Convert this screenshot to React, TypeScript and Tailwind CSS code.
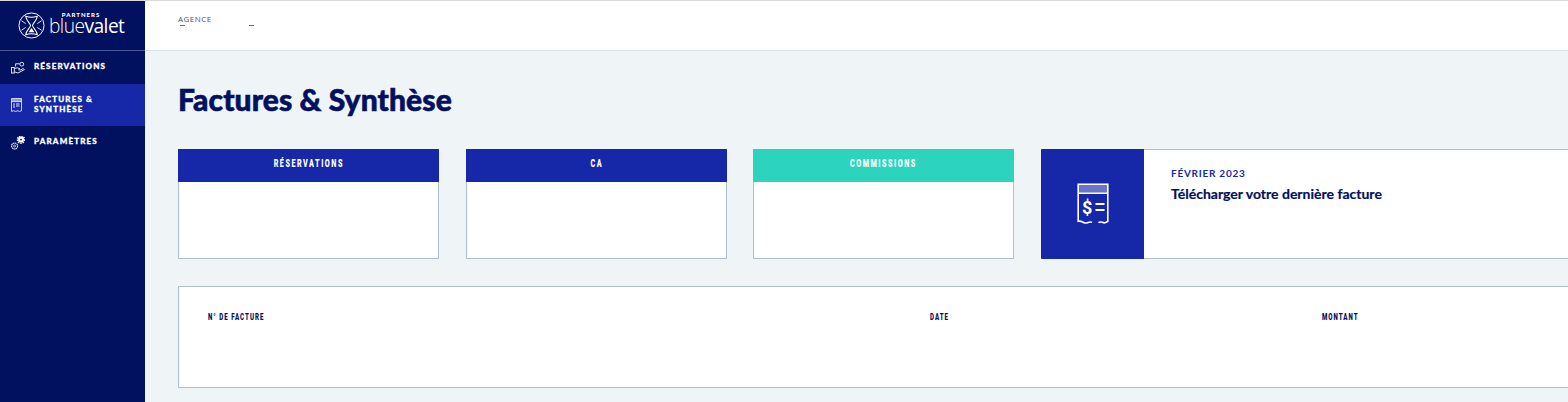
import React from "react";

function Logo() {
  return (
    <svg width="27" height="27" viewBox="0 0 28 28" fill="none" stroke="white" strokeWidth="1" className="shrink-0">
      <circle cx="14" cy="14" r="13" />
      <path d="M8 4.5 C11 5.5 17 5.5 20 4.5 C19.5 9 15.5 11.5 15 14 C15.5 16.5 19.5 19 20 23.5 C17 22.5 11 22.5 8 23.5 C8.5 19 12.5 16.5 13 14 C12.5 11.5 8.5 9 8 4.5 Z" strokeWidth="1.1" />
      <path d="M3.5 9 L8 12 M24.5 9 L20 12 M3.5 19 L8 16 M24.5 19 L20 16" strokeWidth="0.9" />
      <path d="M11 21 L14 16.5 L17 21 Z" fill="white" stroke="none" />
    </svg>
  );
}

function HandIcon() {
  return (
    <svg width="14" height="14" viewBox="0 0 14 14" fill="none" stroke="#dfe3f5" strokeWidth="1">
      <rect x="0.5" y="6.5" width="2.8" height="5.5" />
      <path d="M3.3 7.5 L6.5 6.8 L9 7.8 L7.2 9 M3.3 10.8 L7 12 L13.4 8.6 L12.2 7.6 L8.6 9.4" />
      <circle cx="10.8" cy="3.2" r="1.9" />
      <path d="M4.6 5.6 V2.8 H8.8" />
    </svg>
  );
}

function ListIcon() {
  return (
    <svg width="11" height="14" viewBox="0 0 11 14" fill="none" stroke="#dfe3f5" strokeWidth="0.9">
      <path d="M0.5 0.5 H10.5 V12.8 L8.6 13.4 L6.8 12.8 L4.6 13.4 L2.6 12.8 L0.5 13.4 Z" />
      <rect x="1" y="1" width="9" height="2.2" fill="#8f9ae0" stroke="none" />
      <path d="M0.5 3.6 H10.5 M3 5.2 V10 M5 6 H8.5 M5 8 H8.5" strokeWidth="1" />
    </svg>
  );
}

function GearIcon() {
  return (
    <svg width="14" height="14" viewBox="0 0 14 14" fill="none">
      <circle cx="10" cy="3.6" r="3.6" stroke="white" strokeWidth="1.4" strokeDasharray="1.5 0.9" />
      <circle cx="10" cy="3.6" r="3" fill="white" />
      <circle cx="10" cy="3.6" r="0.9" fill="#021060" />
      <circle cx="3.6" cy="10" r="3" stroke="#dfe3f5" strokeWidth="1.2" strokeDasharray="1.6 0.4" />
      <circle cx="3.6" cy="10" r="1" stroke="#dfe3f5" strokeWidth="0.8" />
    </svg>
  );
}

function ReceiptIcon() {
  return (
    <svg width="32" height="42" viewBox="0 0 32 42" fill="none" stroke="white" strokeWidth="1.6">
      <rect x="2" y="2" width="28" height="7.5" fill="#6b74c9" stroke="none" />
      <path d="M1.2 39 V1.2 H30.8 V39" />
      <path d="M1.2 10.2 H30.8" />
      <path d="M1.2 38.6 C3.5 37 5.5 39.6 8 40 C10.5 40.4 12.5 38 15 39.4 M21.5 39.8 C23.5 37.5 25.5 40.4 28 39.8 L30.8 38.6" />
      <path d="M18.5 21 H27.5 M18.5 27 H27.5" strokeWidth="2" />
      <text x="5" y="30.5" fill="white" stroke="none" fontSize="18" fontWeight="700" fontFamily="Roboto, sans-serif">$</text>
    </svg>
  );
}

function Nav({ icon, label, active }: { icon: React.ReactNode; label: React.ReactNode; active?: boolean }) {
  return (
    <div className={`flex items-center pl-[11px] ${active ? "bg-[#1628a8] h-[42px]" : "h-[33px]"}`}>
      <div className="w-[23px] flex shrink-0 justify-start">{icon}</div>
      <div className="font-['Lato'] font-black text-[8px] leading-[10.5px] pb-[2px] tracking-[1.15px] text-white uppercase [-webkit-text-stroke:0.3px_white]">{label}</div>
    </div>
  );
}

function Stat({ title, color }: { title: string; color: string }) {
  return (
    <div className="w-[261px] h-[110px] shrink-0 bg-white border border-[#aebfd0] border-t-0 rounded-[1px] flex flex-col">
      <div className={`h-[33px] -mx-px flex items-center justify-center text-white ${color}`}>
        <span className="font-['Roboto'] font-black text-[10px] tracking-[2.1px] scale-x-[0.72] -translate-y-[2px]">{title}</span>
      </div>
    </div>
  );
}

function Th({ w, children }: { w: string; children: React.ReactNode }) {
  return (
    <span className={`${w} shrink-0`}>
      <span className="inline-block origin-left scale-x-[0.72] whitespace-nowrap">{children}</span>
    </span>
  );
}

export default function App() {
  return (
    <div className="w-[1568px] h-[402px] overflow-hidden flex flex-col bg-[#eff4f7] font-['Lato',sans-serif]">
      <div className="h-px bg-[#d9d9d9] shrink-0" />
      <div className="flex flex-1 min-h-0">
        <aside className="w-[145px] shrink-0 bg-[#021060] flex flex-col">
          <div className="h-[50px] border-b border-[#4a5790] flex items-start pl-[18px] pt-[11px] gap-[4px]">
            <Logo />
            <div className="flex flex-col items-end">
              <span className="text-[6px] leading-[6px] font-black tracking-[1.05px] text-white mr-[24px]">PARTNERS</span>
              <span className="font-['Open_Sans'] text-[19.2px] leading-[15px] tracking-[-0.55px] text-white font-light">
                blue<span className="font-normal">valet</span>
              </span>
            </div>
          </div>
          <Nav icon={<HandIcon />} label="Réservations" />
          <Nav active icon={<ListIcon />} label={<>Factures &amp;<br />Synthèse</>} />
          <Nav icon={<GearIcon />} label="Paramètres" />
        </aside>
        <main className="flex-1 min-w-0 flex flex-col">
          <header className="h-[50px] shrink-0 bg-white border-b border-[#dbe3ea] pl-[33px] pt-[13px]">
            <div className="text-[8px] leading-[9px] tracking-[0.45px] text-[#44586d] font-['Open_Sans']">AGENCE</div>
            <div className="flex items-start mt-[2px] pl-[2px]">
              <div className="w-[5px] h-px bg-[#5b6f84] mr-[64px]" />
              <div className="w-[5px] h-px bg-[#5b6f84]" />
            </div>
          </header>
          <div className="pl-[33px] flex flex-col">
            <h1 className="mt-[28px] h-[40px] font-['Lato'] font-black text-[30px] leading-[40px] tracking-[0.1px] text-[#021060] [-webkit-text-stroke:0.6px_#021060]">Factures &amp; Synthèse</h1>
            <div className="flex mt-[30px] gap-[27px] w-[1500px]">
              <Stat title="RÉSERVATIONS" color="bg-[#1628a8]" />
              <div className="flex gap-[26px]">
                <Stat title="CA" color="bg-[#1628a8]" />
                <Stat title="COMMISSIONS" color="bg-[#2dd4bd]" />
              </div>
              <div className="w-[600px] h-[110px] shrink-0 bg-white border-y border-[#aebfd0] flex">
                <div className="w-[103px] -my-px bg-[#1628a8] flex items-center justify-center rounded-l-[1px]">
                  <ReceiptIcon />
                </div>
                <div className="pl-[27px] pt-[17px]">
                  <div className="text-[10px] leading-[13px] font-bold tracking-[0.75px] text-[#1628a8]">FÉVRIER 2023</div>
                  <div className="mt-[6px] text-[14px] leading-[16px] font-bold text-[#021060] [-webkit-text-stroke:0.2px_#021060]">Télécharger votre dernière facture</div>
                </div>
              </div>
            </div>
            <div className="mt-[27px] h-[102px] w-[1500px] bg-white border border-[#aebfd0] pl-[29px] pt-[25px] flex text-[#021060] font-['Roboto'] font-black text-[8.5px] leading-[10px] tracking-[1.4px]">
              <Th w="w-[722px]">N° DE FACTURE</Th>
              <Th w="w-[392px]">DATE</Th>
              <Th w="w-[100px]">MONTANT</Th>
            </div>
          </div>
        </main>
      </div>
    </div>
  );
}
